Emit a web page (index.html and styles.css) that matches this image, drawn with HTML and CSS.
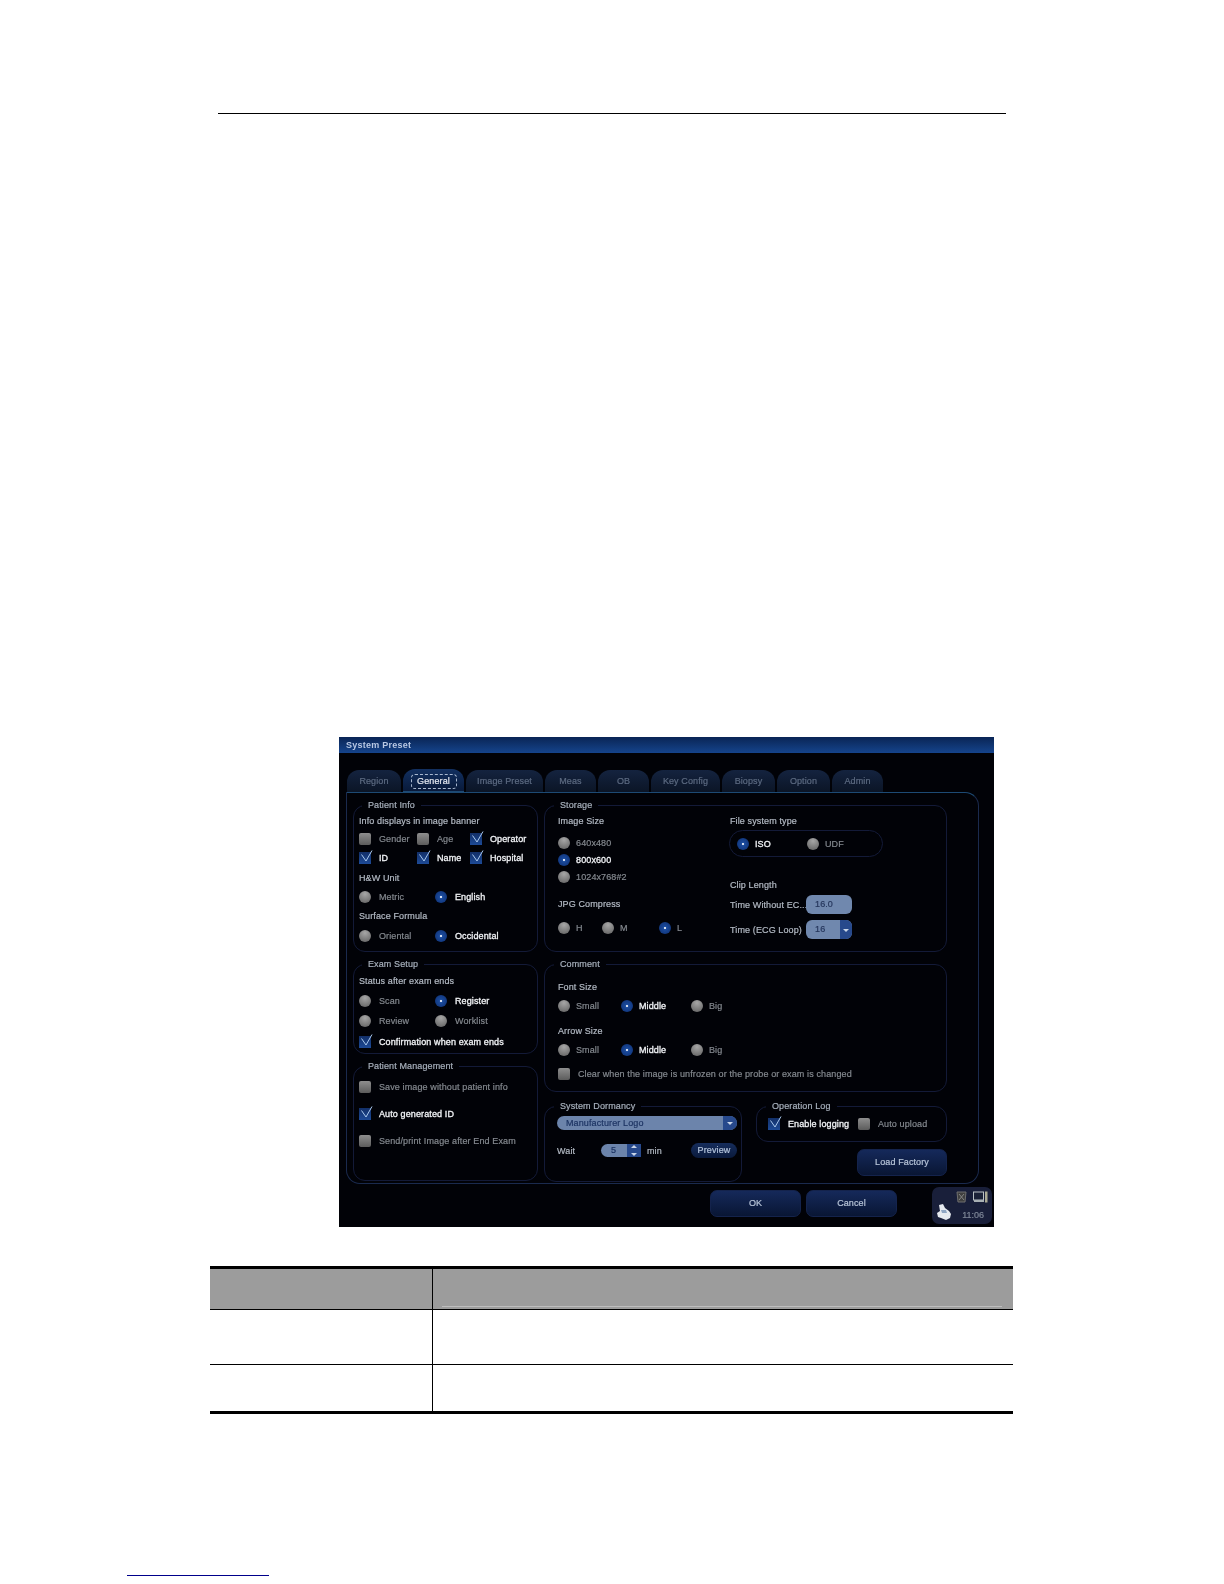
FILE: index.html
```html
<!DOCTYPE html>
<html lang="en">
<head>
    <meta charset="UTF-8">
    <title>System Preset</title>
    <link rel="stylesheet" href="styles.css">
</head>
<body>

<svg class="defs" width="0" height="0">
    <symbol id="tick" viewBox="0 0 14 14">
        <path d="M2.5 4.5 L7 11 L13 0.5" fill="none" stroke="#a9c8ec" stroke-width="1"/>
    </symbol>
</svg>

<div class="page">
    <div class="top-rule"></div>

    <div class="dialog">
        <div class="title-bar">System Preset</div>

        <div class="tabs">
            <div class="tab w54">Region</div>
            <div class="tab tab-active w61"><span>General</span></div>
            <div class="tab w77">Image Preset</div>
            <div class="tab w51">Meas</div>
            <div class="tab w51">OB</div>
            <div class="tab w69">Key Config</div>
            <div class="tab w53">Biopsy</div>
            <div class="tab w53">Option</div>
            <div class="tab w51">Admin</div>
        </div>

        <div class="panel">
            <div class="col col-left">
                <!-- Patient Info -->
                <div class="group patient-info">
                    <div class="legend">Patient Info</div>
                    <div class="row label">Info displays in image banner</div>
                    <div class="row">
                        <div class="field w58"><i class="check"></i><span class="dim">Gender</span></div>
                        <div class="field w53"><i class="check"></i><span class="dim">Age</span></div>
                        <div class="field"><i class="check on"><svg><use href="#tick"/></svg></i><span class="lit">Operator</span></div>
                    </div>
                    <div class="row">
                        <div class="field w58"><i class="check on"><svg><use href="#tick"/></svg></i><span class="lit">ID</span></div>
                        <div class="field w53"><i class="check on"><svg><use href="#tick"/></svg></i><span class="lit">Name</span></div>
                        <div class="field"><i class="check on"><svg><use href="#tick"/></svg></i><span class="lit">Hospital</span></div>
                    </div>
                    <div class="row label">H&amp;W Unit</div>
                    <div class="row">
                        <div class="field w76"><i class="radio"></i><span class="dim">Metric</span></div>
                        <div class="field"><i class="radio on"></i><span class="lit">English</span></div>
                    </div>
                    <div class="row label">Surface Formula</div>
                    <div class="row">
                        <div class="field w76"><i class="radio"></i><span class="dim">Oriental</span></div>
                        <div class="field"><i class="radio on"></i><span class="lit">Occidental</span></div>
                    </div>
                </div>

                <!-- Exam Setup -->
                <div class="group exam-setup">
                    <div class="legend">Exam Setup</div>
                    <div class="row label">Status after exam ends</div>
                    <div class="row">
                        <div class="field w76"><i class="radio"></i><span class="dim">Scan</span></div>
                        <div class="field"><i class="radio on"></i><span class="lit">Register</span></div>
                    </div>
                    <div class="row">
                        <div class="field w76"><i class="radio"></i><span class="dim">Review</span></div>
                        <div class="field"><i class="radio"></i><span class="dim">Worklist</span></div>
                    </div>
                    <div class="row">
                        <div class="field"><i class="check on"><svg><use href="#tick"/></svg></i><span class="lit">Confirmation when exam ends</span></div>
                    </div>
                </div>

                <!-- Patient Management -->
                <div class="group patient-mgmt">
                    <div class="legend">Patient Management</div>
                    <div class="row">
                        <div class="field"><i class="check"></i><span class="dim">Save image without patient info</span></div>
                    </div>
                    <div class="row">
                        <div class="field"><i class="check on"><svg><use href="#tick"/></svg></i><span class="lit">Auto generated ID</span></div>
                    </div>
                    <div class="row">
                        <div class="field"><i class="check"></i><span class="dim">Send/print Image after End Exam</span></div>
                    </div>
                </div>
            </div>

            <div class="col col-right">
                <!-- Storage -->
                <div class="group storage">
                    <div class="legend legend-r">Storage</div>
                    <div class="storage-left">
                        <div class="row label">Image Size</div>
                        <div class="row size-row first"><div class="field tight"><i class="radio"></i><span class="dim">640x480</span></div></div>
                        <div class="row size-row"><div class="field tight"><i class="radio on"></i><span class="lit">800x600</span></div></div>
                        <div class="row size-row"><div class="field tight"><i class="radio"></i><span class="dim">1024x768#2</span></div></div>
                        <div class="row label jpg">JPG Compress</div>
                        <div class="row jpg-row">
                            <div class="field tight w44"><i class="radio"></i><span class="dim">H</span></div>
                            <div class="field tight w57"><i class="radio"></i><span class="dim">M</span></div>
                            <div class="field tight"><i class="radio on"></i><span class="dim">L</span></div>
                        </div>
                    </div>
                    <div class="storage-right">
                        <div class="row label">File system type</div>
                        <div class="pill">
                            <div class="field tight w70"><i class="radio on"></i><span class="lit">ISO</span></div>
                            <div class="field tight"><i class="radio"></i><span class="dim">UDF</span></div>
                        </div>
                        <div class="row label clip">Clip Length</div>
                        <div class="row input-row">
                            <span class="input-label">Time Without EC...</span>
                            <div class="input">16.0</div>
                        </div>
                        <div class="row input-row">
                            <span class="input-label">Time (ECG Loop)</span>
                            <div class="input"><span>16</span><b class="drop"></b></div>
                        </div>
                    </div>
                </div>

                <!-- Comment -->
                <div class="group comment">
                    <div class="legend legend-r">Comment</div>
                    <div class="row label">Font Size</div>
                    <div class="row">
                        <div class="field tight w63"><i class="radio"></i><span class="dim">Small</span></div>
                        <div class="field tight w70"><i class="radio on"></i><span class="lit">Middle</span></div>
                        <div class="field tight"><i class="radio"></i><span class="dim">Big</span></div>
                    </div>
                    <div class="row label">Arrow Size</div>
                    <div class="row">
                        <div class="field tight w63"><i class="radio"></i><span class="dim">Small</span></div>
                        <div class="field tight w70"><i class="radio on"></i><span class="lit">Middle</span></div>
                        <div class="field tight"><i class="radio"></i><span class="dim">Big</span></div>
                    </div>
                    <div class="row">
                        <div class="field"><i class="check"></i><span class="dim">Clear when the image is unfrozen or the probe or exam is changed</span></div>
                    </div>
                </div>

                <div class="bottom-groups">
                    <!-- System Dormancy -->
                    <div class="group dormancy">
                        <div class="legend legend-r">System Dormancy</div>
                        <div class="select"><span>Manufacturer Logo</span><b class="drop"></b></div>
                        <div class="wait-row">
                            <span class="label wait-label">Wait</span>
                            <div class="spin"><span>5</span><b class="spin-arrows"></b></div>
                            <span class="label">min</span>
                            <div class="preview">Preview</div>
                        </div>
                    </div>

                    <div class="log-col">
                        <!-- Operation Log -->
                        <div class="group op-log">
                            <div class="legend legend-log">Operation Log</div>
                            <div class="row">
                                <div class="field w90"><i class="check on"><svg><use href="#tick"/></svg></i><span class="lit">Enable logging</span></div>
                                <div class="field"><i class="check"></i><span class="dim">Auto upload</span></div>
                            </div>
                        </div>
                        <div class="btn load-factory">Load Factory</div>
                    </div>
                </div>
            </div>
        </div>

        <div class="dialog-foot">
            <div class="btn foot-btn">OK</div>
            <div class="btn foot-btn">Cancel</div>
            <div class="tray">
                <div class="tray-icons">
                    <svg width="11" height="12" viewBox="0 0 11 12">
                        <path d="M1 1 H10 L9 11 H2 Z" fill="#3f3f3f" stroke="#6f6f6f"/>
                        <path d="M3 3 L8 9 M8 3 L3 9" stroke="#858585"/>
                    </svg>
                    <svg width="15" height="12" viewBox="0 0 15 12">
                        <rect x="0.5" y="1" width="10" height="8" fill="#1b2238" stroke="#b9c0c4"/>
                        <rect x="1" y="9" width="10" height="2" fill="#a8b0b4"/>
                        <rect x="12" y="0.5" width="2.5" height="11" fill="#a9a994"/>
                    </svg>
                </div>
                <div class="tray-bottom">
                    <svg width="14" height="16" viewBox="0 0 14 16">
                        <path d="M2 1 L6 0 L8 4 L12 7 L14 10 L13 14 L9 16 L4 14 L1 13 L0 9 L3 7 Z" fill="#e6eaf0"/>
                        <path d="M4 6 L9 6 L10 9 L5 9 Z" fill="#8fa6c4"/>
                    </svg>
                    <span class="clock">11:06</span>
                </div>
            </div>
        </div>
    </div>

    <table class="doc-table">
        <thead>
        <tr>
            <th class="first"></th>
            <th class="second"><div class="head-line"></div></th>
        </tr>
        </thead>
        <tbody>
        <tr class="row-a">
            <td class="first"></td>
            <td></td>
        </tr>
        <tr class="row-b">
            <td class="first"></td>
            <td></td>
        </tr>
        </tbody>
    </table>

    <div class="foot-link"></div>
</div>

</body>
</html>
```

FILE: styles.css
```css
* {
    box-sizing: border-box;
}
body {
    margin: 0;
    background-color: #ffffff;
    font-family: "Liberation Sans", Arial, sans-serif;
}
.defs {
    position: absolute;
}
.page {
    width: 1224px;
    height: 1584px;
    padding-top: 113px;
    overflow: hidden;
}
.top-rule {
    width: 788px;
    height: 1px;
    margin-left: 218px;
    background-color: #000;
}

/* Dialog */
.dialog {
    width: 655px;
    height: 490px;
    margin-top: 623px;
    margin-left: 339px;
    background-color: #010207;
    color: #b9bfc8;
    font-size: 9px;
    letter-spacing: 0.12px;
    -webkit-text-stroke: 0.2px;
    white-space: nowrap;
    filter: blur(0.3px);
}
.title-bar {
    height: 16px;
    padding-left: 7px;
    line-height: 16px;
    font-weight: bold;
    letter-spacing: 0.25px;
    color: #b8c8e4;
    -webkit-text-stroke: 0;
    background: linear-gradient(#0a2555, #15448c);
}
.tabs {
    display: flex;
    gap: 2px;
    height: 22px;
    margin-top: 17px;
    margin-left: 8px;
    align-items: flex-end;
}
.tab {
    height: 22px;
    line-height: 22px;
    text-align: center;
    color: #5d6b82;
    border-radius: 12px 12px 0 0;
    background: linear-gradient(#14233f, #0b1526);
}
.tab-active {
    height: 23px;
    padding-top: 5px;
    line-height: 1;
    color: #e4e8f0;
    background: linear-gradient(#123061, #091a3a);
    border-bottom: 1px solid #1d4a74;
}
.tab-active span {
    display: block;
    width: 46px;
    height: 15px;
    margin: 0 auto;
    line-height: 13px;
    border: 1px dashed #a8b8d0;
    border-radius: 4px;
}
.w44 { width: 44px; }
.w51 { width: 51px; }
.w53 { width: 53px; }
.w54 { width: 54px; }
.w57 { width: 57px; }
.w58 { width: 58px; }
.w61 { width: 61px; }
.w63 { width: 63px; }
.w69 { width: 69px; }
.w70 { width: 70px; }
.w76 { width: 76px; }
.w77 { width: 77px; }
.w90 { width: 90px; }

.panel {
    display: flex;
    gap: 6px;
    width: 633px;
    height: 392px;
    margin-left: 7px;
    padding: 12px 0 0 6px;
    border: 1px solid #1a2a4e;
    border-top-color: #1d4a74;
    border-radius: 0 14px 14px 14px;
}
.col {
    display: flex;
    flex-direction: column;
}
.col-left {
    width: 185px;
    gap: 12px;
}
.col-right {
    width: 403px;
    gap: 12px;
}

/* Groups */
.group {
    position: relative;
    display: grid;
    align-items: center;
    align-content: start;
    padding: 8px 5px 0;
    border: 1px solid #131a38;
    border-radius: 12px;
}
.legend {
    position: absolute;
    top: -7px;
    left: 8px;
    padding: 0 6px;
    height: 12px;
    line-height: 12px;
    color: #a7b0bc;
    background-color: #010207;
}
.legend-r {
    left: 9px;
}
.legend-log {
    left: 9px;
}
.row {
    display: flex;
    align-items: center;
}
.label {
    color: #b3bac4;
}
.field {
    display: flex;
    align-items: center;
    gap: 8px;
}
.tight {
    gap: 6px;
}
.dim {
    color: #84898f;
}
.lit {
    color: #f2f4f7;
    -webkit-text-stroke: 0.3px;
}
.patient-info {
    height: 147px;
    padding-top: 7px;
    grid-template-rows: 16px 19px 20px 19px 20px 17px 23px;
}
.exam-setup {
    height: 90px;
    grid-template-rows: 16px 24px 15px 28px;
}
.patient-mgmt {
    height: 115px;
    grid-template-rows: 24px 29px 25px;
}
.storage {
    height: 147px;
    padding-top: 7px;
    padding-left: 13px;
    grid-template-columns: 172px 1fr;
    align-items: start;
}
.storage-left .label {
    height: 16px;
}
.size-row {
    height: 17px;
}
.size-row.first {
    margin-top: 5px;
}
.jpg {
    margin-top: 11px;
}
.jpg-row {
    height: 18px;
    margin-top: 7px;
}
.storage-right {
    display: flex;
    flex-direction: column;
}
.storage-right > .label {
    height: 16px;
}
.pill {
    display: flex;
    align-items: center;
    width: 154px;
    height: 27px;
    margin-top: 1px;
    margin-left: -1px;
    padding-left: 7px;
    border: 1px solid #131a38;
    border-radius: 14px;
}
.clip {
    margin-top: 20px;
}
.input-row {
    height: 19px;
    margin-top: 2px;
}
.input-row + .input-row {
    margin-top: 6px;
}
.input-label {
    width: 76px;
    color: #b3bac4;
}
.input {
    position: relative;
    flex: none;
    width: 46px;
    height: 19px;
    padding-left: 9px;
    line-height: 18px;
    color: #25365c;
    background-color: #7088ae;
    border-radius: 6px;
    overflow: hidden;
}
.input .drop {
    position: absolute;
    top: 0;
    right: 0;
    width: 12px;
    height: 100%;
}
.drop {
    background-color: #27498c;
}
.drop::after {
    content: "";
    position: absolute;
    top: 45%;
    left: 50%;
    margin-left: -3px;
    border: 3px solid transparent;
    border-top-color: #c9d5e8;
    border-bottom: 0;
}
.comment {
    height: 128px;
    padding-top: 16px;
    padding-left: 13px;
    grid-template-rows: 12px 26px 24px 14px 34px;
}
.bottom-groups {
    display: flex;
    gap: 14px;
    margin-top: 2px;
}
.dormancy {
    display: block;
    width: 198px;
    height: 76px;
    padding: 9px 5px 0 12px;
}
.select {
    position: relative;
    display: flex;
    align-items: center;
    width: 180px;
    height: 14px;
    padding-left: 9px;
    color: #1d3463;
    background-color: #6c84ab;
    border-radius: 7px;
    overflow: hidden;
}
.select .drop {
    position: absolute;
    top: 0;
    right: 0;
    width: 14px;
    height: 100%;
}
.wait-row {
    display: flex;
    align-items: center;
    margin-top: 13px;
    height: 15px;
    width: 180px;
}
.wait-label {
    width: 44px;
}
.spin {
    position: relative;
    width: 40px;
    height: 13px;
    margin-right: 6px;
    padding-left: 10px;
    line-height: 13px;
    color: #1d3463;
    background-color: #6c84ab;
    border-radius: 7px 0 0 7px;
}
.spin-arrows {
    position: absolute;
    top: 0;
    right: 0;
    width: 14px;
    height: 13px;
    background-color: #27498c;
}
.spin-arrows::before,
.spin-arrows::after {
    content: "";
    position: absolute;
    left: 4px;
    border: 3px solid transparent;
}
.spin-arrows::before {
    top: -1px;
    border-bottom-color: #c9d5e8;
    border-top: 0;
    margin-top: 2px;
}
.spin-arrows::after {
    bottom: 1px;
    border-top-color: #c9d5e8;
    border-bottom: 0;
}
.preview {
    width: 46px;
    height: 15px;
    margin-left: auto;
    line-height: 15px;
    text-align: center;
    color: #b4c4dc;
    background: linear-gradient(#162d5c, #0a1a3c);
    border-radius: 8px;
}
.log-col {
    display: flex;
    flex-direction: column;
    align-items: flex-end;
}
.op-log {
    width: 191px;
    height: 36px;
    padding: 0 11px;
    align-content: center;
}
.btn {
    text-align: center;
    color: #b7c4d8;
    background: linear-gradient(#15295a, #091634);
    border: 1px solid #14234c;
    border-radius: 7px;
}
.load-factory {
    width: 90px;
    height: 27px;
    margin-top: 7px;
    line-height: 25px;
}

/* Controls */
.check,
.radio {
    display: block;
    flex: none;
    position: relative;
    width: 12px;
    height: 12px;
}
.check {
    border-radius: 2px;
    background: linear-gradient(#8e8e8e, #5c5c5c);
}
.check.on {
    border-radius: 0;
    background: linear-gradient(#122f68, #1d4a96);
}
.check svg {
    position: absolute;
    top: -2px;
    left: 0;
    width: 14px;
    height: 14px;
}
.radio {
    border-radius: 50%;
    background: radial-gradient(circle at 50% 25%, #a6a6a6, #5f5f5f);
}
.radio.on {
    background: radial-gradient(circle at 50% 50%, #d6e0f0 0, #d6e0f0 1px, #1a4a9c 1.6px, #0e2f70 100%);
}

/* Footer of dialog */
.dialog-foot {
    display: flex;
    align-items: flex-start;
    gap: 5px;
    height: 43px;
    padding-top: 6px;
    padding-left: 371px;
}
.foot-btn {
    width: 91px;
    height: 27px;
    line-height: 25px;
}
.tray {
    width: 60px;
    height: 37px;
    margin-top: -3px;
    margin-left: 30px;
    padding: 4px 4px 0 5px;
    background-color: #191f3a;
    border-radius: 7px;
}
.tray-icons {
    display: flex;
    justify-content: flex-end;
    gap: 6px;
}
.tray-bottom {
    display: flex;
    align-items: flex-end;
    justify-content: space-between;
    margin-top: 1px;
}
.clock {
    color: #7f8798;
    margin-right: 4px;
    letter-spacing: 0;
}

/* Table under the screenshot */
.doc-table {
    width: 803px;
    margin-top: 39px;
    margin-left: 210px;
    border-spacing: 0;
    table-layout: fixed;
}
.doc-table th,
.doc-table td {
    padding: 0;
    border-bottom: 1px solid #000;
}
.doc-table th {
    position: relative;
    height: 44px;
    border-top: 3px solid #000;
    background-color: #9c9c9c;
}
.doc-table .first {
    width: 223px;
    border-right: 1px solid #000;
}
.head-line {
    position: absolute;
    bottom: 2px;
    left: 9px;
    right: 11px;
    height: 1px;
    background-color: #bdbdbd;
}
.row-a td {
    height: 55px;
}
.row-b td {
    height: 49px;
    border-bottom-width: 3px;
}
.foot-link {
    width: 142px;
    height: 1px;
    margin-top: 161px;
    margin-left: 127px;
    background-color: #00008b;
}
```
